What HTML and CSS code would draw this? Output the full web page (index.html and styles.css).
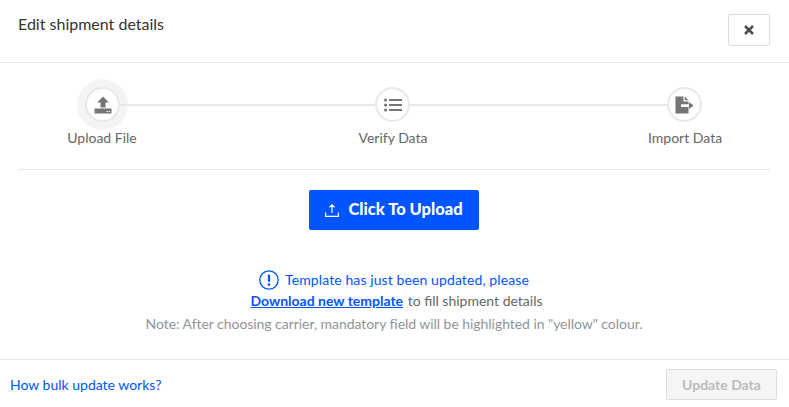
FILE: index.html
```html
<!DOCTYPE html>
<html lang="en">
<head>
  <meta charset="UTF-8">
  <meta name="viewport" content="width=device-width, initial-scale=1.0">
  <title>Edit shipment details</title>
  <link rel="stylesheet" href="styles.css">
</head>
<body>
  <div class="modal">
    <header class="modal-header">
      <h1 class="modal-title">Edit shipment details</h1>
      <button class="close-btn" type="button" aria-label="Close">
        <svg width="10" height="10" viewBox="0 0 10 10"><path d="M1 1l8 8M9 1l-8 8" stroke="#4d4d4d" stroke-width="2.5" fill="none"/></svg>
      </button>
    </header>

    <section class="modal-body">
      <div class="stepper">
        <div class="track">
          <span class="circle circle-active">
            <svg width="18" height="18" viewBox="0 0 18 18"><path d="M9 0.5L15 6.5H11.5V11.5H6.5V6.5H3z" fill="#757575"/><path d="M0.5 12.5H17.5V17.5H0.5z" fill="#757575"/><path d="M12.5 15.5h1.4M14.8 15.5h1.4" stroke="#fff" stroke-width="1"/></svg>
          </span>
          <span class="line line-first"></span>
          <span class="circle">
            <svg width="18" height="14" viewBox="0 0 18 14"><g fill="#757575"><circle cx="1.6" cy="2" r="1.6"/><circle cx="1.6" cy="7" r="1.6"/><circle cx="1.6" cy="12" r="1.6"/><rect x="5" y="1" width="13" height="2"/><rect x="5" y="6" width="13" height="2"/><rect x="5" y="11" width="13" height="2"/></g></svg>
          </span>
          <span class="line"></span>
          <span class="circle">
            <svg width="19" height="18" viewBox="0 0 19 18"><g fill="#757575"><path d="M0.5 0.5H8.5V5.5H13.5V8.2H6V11H13.5V17.5H0.5z"/><path d="M9.8 0.5L13.5 4.2H9.8z"/><path d="M14 6.2L18.6 9.6 14 13z"/></g></svg>
          </span>
        </div>
        <div class="labels">
          <span>Upload File</span>
          <span>Verify Data</span>
          <span>Import Data</span>
        </div>
      </div>

      <div class="upload-row">
        <button class="upload-btn" type="button">
          <svg width="14" height="13" viewBox="0 0 14 13"><path d="M7 9V1M4.4 3.4L7 .8l2.6 2.6M.6 8.5v3.9h12.8V8.5" stroke="#fff" stroke-width="1.2" fill="none"/></svg>
          <span class="upload-text">Click To Upload</span>
        </button>
      </div>

      <div class="notes">
        <p class="note-blue">
          <svg width="20" height="20" viewBox="0 0 20 20"><circle cx="10" cy="10" r="9.2" stroke="#0055ff" stroke-width="1.3" fill="none"/><rect x="8.9" y="4.5" width="2.2" height="7.5" rx="1.1" fill="#0055ff"/><circle cx="10" cy="14.6" r="1.3" fill="#0055ff"/></svg>
          <span class="note-blue-text">Template has just been updated, please</span>
        </p>
        <p class="note-link"><a href="#" class="download-link">Download new template</a> to fill shipment details</p>
        <p class="note-grey">Note: After choosing carrier, mandatory field will be highlighted in "yellow" colour.</p>
      </div>
    </section>

    <footer class="modal-footer">
      <a href="#" class="help-link">How bulk update works?</a>
      <button class="update-btn" type="button" disabled>Update Data</button>
    </footer>
  </div>
</body>
</html>
```

FILE: styles.css
```css
* {
  box-sizing: border-box;
}

body {
  margin: 0;
  font-family: 'Lato', 'Liberation Sans', sans-serif;
  font-size: 14px;
  color: #666;
  background-color: #fff;
}

.modal {
  width: 789px;
  height: 407px;
  display: flex;
  flex-direction: column;
}

/* Header */
.modal-header {
  height: 63px;
  padding: 14px 19px 0 18px;
  display: flex;
  justify-content: space-between;
  align-items: flex-start;
  border-bottom: 1px solid #e8e8e8;
}

.modal-title {
  margin: 0;
  font-size: 16px;
  line-height: 19px;
  font-weight: 400;
  color: #333;
}

.close-btn {
  width: 42px;
  height: 32px;
  padding: 0;
  display: flex;
  align-items: center;
  justify-content: center;
  background: #fff;
  border: 1px solid #ddd;
  border-radius: 2px;
}

/* Stepper */
.modal-body {
  flex: 1;
  padding: 0 19px 0 18px;
}

.stepper {
  height: 107px;
  padding-top: 24px;
  border-bottom: 1px solid #e8e8e8;
}

.track {
  display: flex;
  align-items: center;
  padding: 0 68px 0 67px;
}

.circle {
  width: 35px;
  height: 35px;
  flex: none;
  display: flex;
  align-items: center;
  justify-content: center;
  background: #fff;
  border: 2px solid #e8e8e8;
  border-radius: 50%;
}

.circle-active {
  box-shadow: 0 0 0 8px #f4f4f4;
}

.line {
  flex: 1;
  height: 2px;
  background-color: #e8e8e8;
}

.line-first {
  flex: none;
  width: 255px;
}

.labels {
  margin-top: 7px;
  padding: 0 50px 0 48px;
  display: flex;
  justify-content: space-between;
  line-height: 18px;
  color: #666;
}

.labels span {
  width: 72px;
  text-align: center;
  white-space: nowrap;
}

/* Upload */
.upload-row {
  margin-top: 20px;
  display: flex;
  justify-content: center;
}

.upload-btn {
  width: 170px;
  height: 40px;
  padding: 0;
  display: flex;
  align-items: center;
  justify-content: center;
  gap: 9px;
  font-family: inherit;
  font-size: 16.5px;
  font-weight: 900;
  color: #fff;
  background-color: #0055ff;
  border: none;
  border-radius: 2px;
}

.upload-text {
  margin-bottom: 2px;
}

.notes {
  margin-top: 39px;
  text-align: center;
}

.notes p {
  margin: 0;
  line-height: 22px;
}

.note-blue {
  display: flex;
  justify-content: center;
  align-items: center;
  gap: 6px;
  color: #0055ff;
}

.note-blue-text {
  letter-spacing: 0.1px;
}

.notes .note-link {
  margin: -1px 0 1px;
  padding-left: 5px;
}

.download-link {
  margin-right: 1px;
  font-weight: 700;
  color: #0055ff;
}

.note-grey {
  color: #8f9499;
  letter-spacing: -0.05px;
}

/* Footer */
.modal-footer {
  height: 48px;
  padding: 2px 12px 0 10px;
  display: flex;
  justify-content: space-between;
  align-items: center;
  border-top: 1px solid #e8e8e8;
}

.help-link {
  color: #0055ff;
  text-decoration: none;
}

.update-btn {
  width: 111px;
  height: 31px;
  font-family: inherit;
  font-size: 14px;
  font-weight: 700;
  color: #bbb;
  background-color: #f5f5f5;
  border: 1px solid #ddd;
  border-radius: 2px;
}
```
